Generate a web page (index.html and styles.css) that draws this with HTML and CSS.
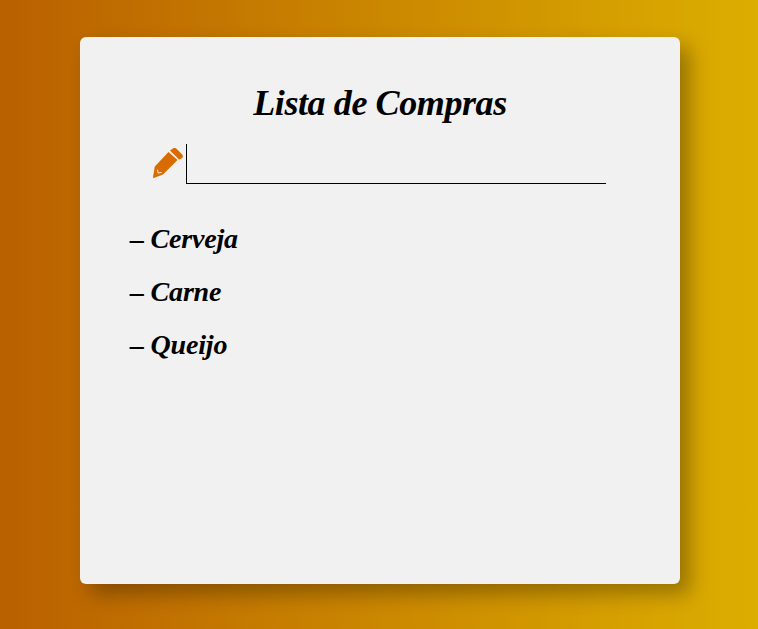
FILE: index.html
```html
<!DOCTYPE html>
<html lang="pt">
<head>
<meta charset="utf-8">
<title>Lista de Compras</title>
<link rel="stylesheet" href="styles.css">
</head>
<body>
<main class="card">
  <h1 class="title">Lista de Compras</h1>
  <form class="entry">
    <svg class="pencil" viewBox="0 0 30 30" aria-hidden="true">
      <path d="M17 2.5 19.5.8a3 3 0 0 1 4 0L29 6.3a3 3 0 0 1 0 4L26 11.5z"/>
      <path fill-rule="evenodd" d="M15.5 4 24.5 12 10 26.5.8 29.9Q-.2 30 0 29L1.8 18.5zM3.8 21.8 4.9 25.6 8.6 25 8.4 24 5.7 24.5 4.8 21.6z"/>
    </svg>
    <input class="field" type="text" aria-label="Novo item">
  </form>
  <ul class="items">
    <li class="item">– Cerveja</li>
    <li class="item">– Carne</li>
    <li class="item">– Queijo</li>
  </ul>
</main>
</body>
</html>
```
FILE: styles.css
```css
* { box-sizing: border-box; }

html, body { height: 100%; }

body {
  margin: 0;
  padding-left: 80px;
  background: linear-gradient(to right, #b96000, #dcae00);
  font-family: "Liberation Serif", "Times New Roman", serif;
  font-style: italic;
  color: #000;
  overflow: hidden;
}

.card {
  width: 600px;
  height: 547px;
  margin-top: 37px;
  padding: 42px 50px 0;
  background: #f1f1f1;
  border-radius: 6px;
  box-shadow: 10px 10px 20px rgba(0, 0, 0, 0.3);
}

.title {
  margin: 0;
  font-size: 36px;
  line-height: 48px;
  font-weight: 700;
  letter-spacing: -0.4px;
  text-align: center;
}

.entry {
  display: flex;
  justify-content: center;
  align-items: flex-end;
  gap: 3px;
  margin-top: 17px;
  padding-right: 1px;
}

.pencil {
  width: 30px;
  height: 30px;
  margin-bottom: 6px;
  fill: #d96c00;
}

.field {
  width: 420px;
  height: 40px;
  border: 0;
  border-left: 1px solid #000;
  border-bottom: 1px solid #000;
  background: transparent;
  outline: none;
}

.items {
  list-style: none;
  margin: 28px 0 0;
  padding: 0;
}

.item {
  font-size: 28px;
  line-height: 53px;
  font-weight: 700;
  letter-spacing: -0.2px;
}
```
